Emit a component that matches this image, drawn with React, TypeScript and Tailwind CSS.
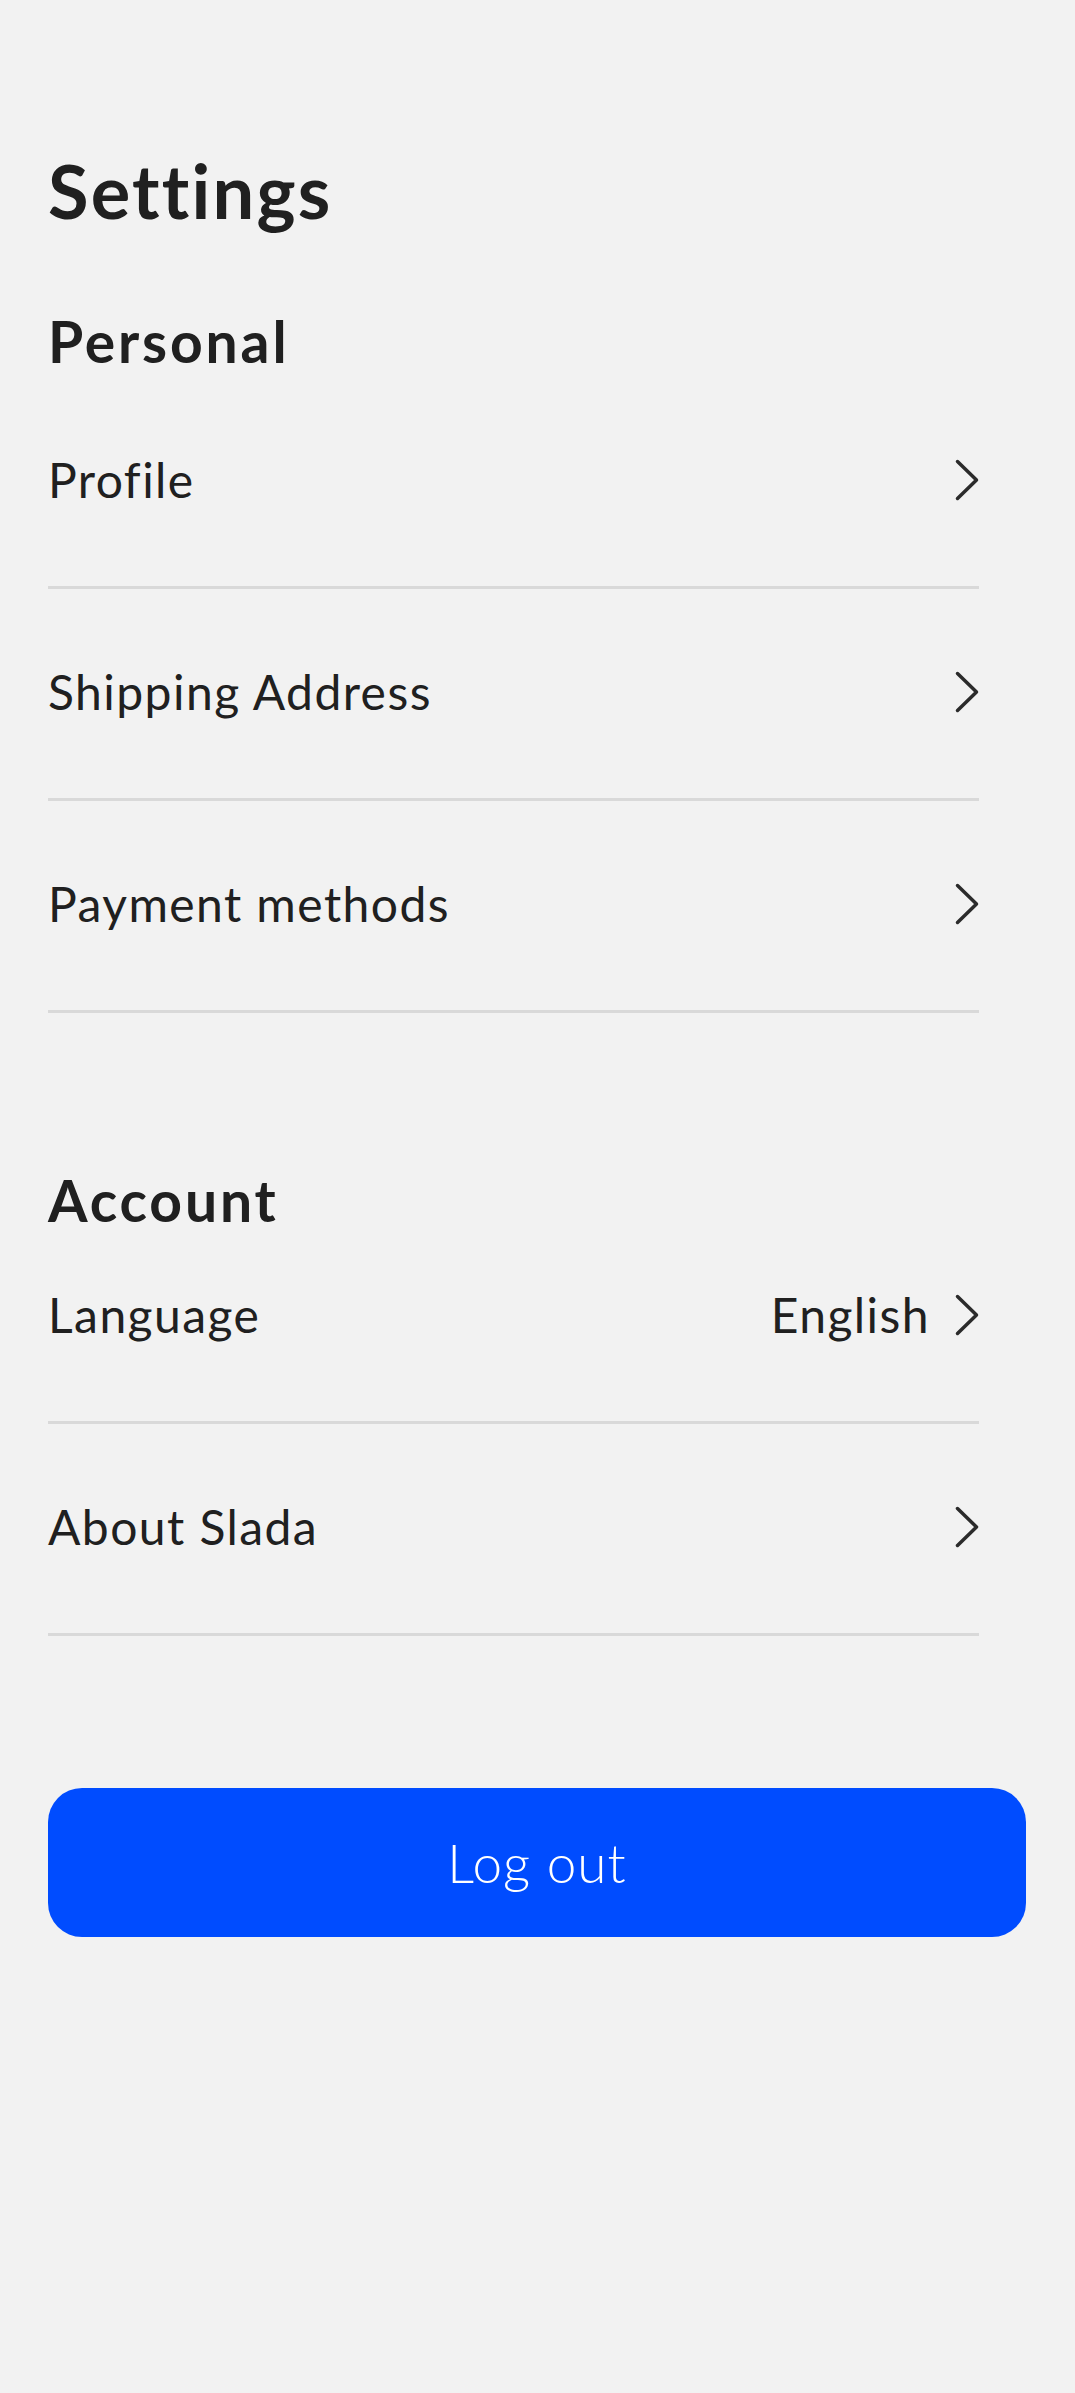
const Chevron = () => (
  <svg width="24" height="42" viewBox="0 0 24 42" fill="none" className="shrink-0">
    <polyline
      points="2.5,2.5 21.5,21 2.5,39.5"
      stroke="#2b2b2b"
      strokeWidth="3.5"
      strokeLinecap="round"
      strokeLinejoin="round"
    />
  </svg>
);

type RowProps = { label: string; value?: string };

const Row = ({ label, value }: RowProps) => {
  return (
    <div className="flex items-center justify-between pb-[82px] border-b-[3px] border-[#d9d9d9]">
      <p className="text-[48px] leading-[48px] tracking-[0.03em] text-[#202020]">{label}</p>
      <div className="flex items-center gap-[25px]">
        {value && (
          <p className="text-[48px] leading-[48px] tracking-[0.03em] text-[#202020]">{value}</p>
        )}
        <Chevron />
      </div>
    </div>
  );
};

const App = () => {
  return (
    <div
      className="min-h-[2393px] w-full bg-[#f2f2f2] pl-[48px] pr-[49px] pt-[154px]"
      style={{ fontFamily: "Lato, 'Noto Sans', sans-serif" }}
    >
      <h1 className="text-[74px] leading-[74px] font-bold tracking-[0.03em] text-[#202020]">
        Settings
      </h1>

      <h2 className="mt-[85px] text-[57px] leading-[57px] font-bold tracking-[0.05em] text-[#202020]">
        Personal
      </h2>
      <div className="mt-[86px] mr-[47px] flex flex-col gap-[79px]">
        <Row label="Profile" />
        <Row label="Shipping Address" />
        <Row label="Payment methods" />
      </div>

      <h2 className="mt-[159px] text-[57px] leading-[57px] font-bold tracking-[0.05em] text-[#202020]">
        Account
      </h2>
      <div className="mt-[62px] mr-[47px] flex flex-col gap-[79px]">
        <Row label="Language" value="English" />
        <Row label="About Slada" />
      </div>

      <button className="mt-[152px] flex h-[149px] w-full items-center justify-center rounded-[34px] bg-[#004cff] text-[53px] font-light tracking-[0.02em] text-white">
        Log out
      </button>
    </div>
  );
};

export default App;
